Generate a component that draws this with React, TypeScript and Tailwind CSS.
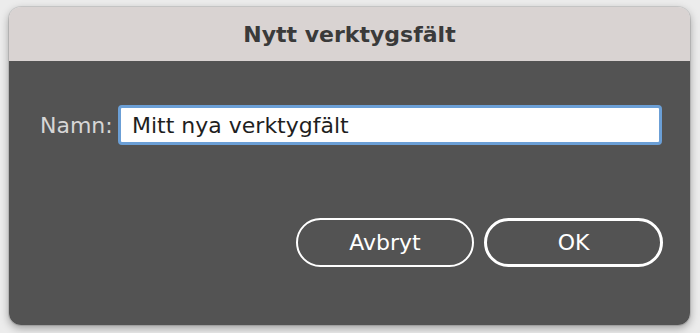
import React from "react"

export default function App() {
  return (
    <div
      className="w-[700px] h-[333px] bg-[#ececec] pt-[7px] pl-[9px] pr-[10px] pb-[8px]"
      style={{ fontFamily: '"DejaVu Sans", Verdana, sans-serif' }}
    >
      <div className="h-full flex flex-col rounded-[12px] overflow-hidden shadow-[0_3px_8px_rgba(0,0,0,0.35)] ring-1 ring-black/10">
        {/* title bar */}
        <div className="h-[54px] shrink-0 bg-[#d9d3d2] flex items-center justify-center">
          <span className="text-[22px] font-bold text-[#3a3a3a]">Nytt verktygsfält</span>
        </div>

        {/* body */}
        <div className="flex-1 bg-[#535353] flex flex-col pl-[31px] pr-[27px] pt-[44px]">
          <div className="flex items-center h-[40px]">
            <label className="text-[22px] text-[#d6d6d6] w-[78px] shrink-0">Namn:</label>
            <input
              defaultValue="Mitt nya verktygfält"
              className="flex-1 mr-px h-[40px] bg-white rounded-[4px] border-[3px] border-[#6b9fd6] px-[11px] text-[22px] text-[#1f1f1f] outline-none"
            />
          </div>

          <div className="flex justify-end gap-[10px] mt-[73px]">
            <button className="w-[178px] h-[49px] rounded-full border-2 border-white text-white text-[22px]">
              Avbryt
            </button>
            <button className="w-[179px] h-[49px] rounded-full border-[3px] border-white text-white text-[22px]">
              OK
            </button>
          </div>
        </div>
      </div>
    </div>
  )
}
